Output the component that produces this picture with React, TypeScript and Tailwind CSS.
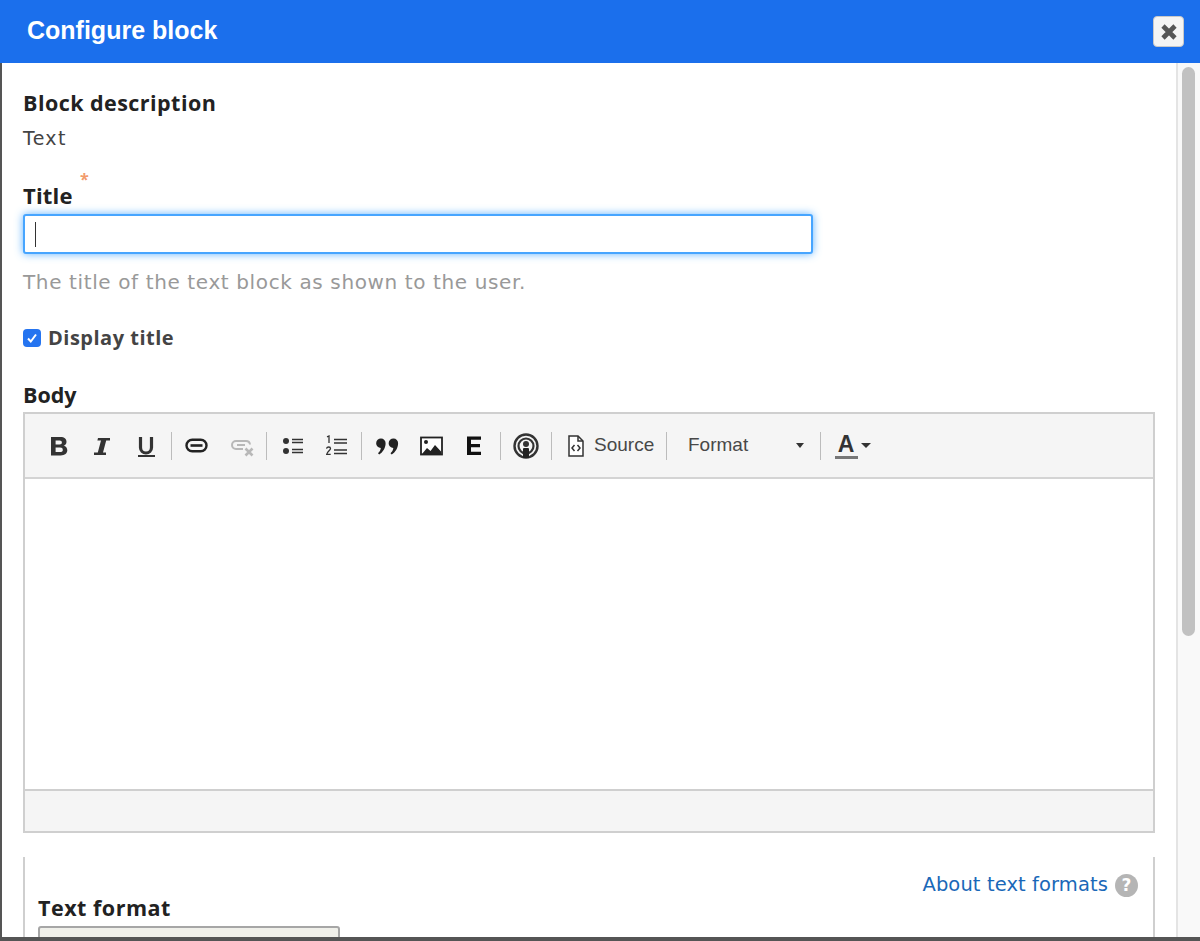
import React from "react";

const Sep = ({ ml, mr }: { ml: string; mr: string }) => (
  <span className={`w-px h-[28px] bg-[#bcbcbc] shrink-0 ${ml} ${mr}`} />
);

const Ico = ({ w, children, cls }: { w: number; children: React.ReactNode; cls: string }) => (
  <svg width={w} height={24} viewBox={`0 0 ${w} 24`} className={`shrink-0 ${cls}`}>
    {children}
  </svg>
);

const Quote = ({ x }: { x: number }) => (
  <path
    transform={`translate(${x} 0)`}
    d="M5 4.5a4.6 4.6 0 0 1 4.6 4.8c0 4.4-2.6 9-6.4 11.2L2 19.2c1.6-1.4 2.6-3 2.8-5.2A4.7 4.7 0 0 1 5 4.5z"
    fill="#222"
  />
);

export default function App() {
  return (
    <div className="w-[1200px] h-[941px] overflow-hidden bg-[#555555] pl-[2px] pb-[4px] font-['DejaVu_Sans',sans-serif]">
      <div className="h-[937px] bg-white flex flex-col">
        <header className="h-[63px] shrink-0 bg-[#1b6fec] -ml-[2px] pl-[27px] pr-[16px] flex items-center justify-between">
          <h1 className="font-['Liberation_Sans',sans-serif] font-bold text-[25px] leading-none text-white -mt-[2px]">
            Configure block
          </h1>
          <button className="w-[31px] h-[31px] rounded-[4px] bg-[#f4f4f4] border border-[#c8c8c8] flex items-center justify-center">
            <svg width="18" height="18" viewBox="0 0 18 18">
              <path d="M3 3 L15 15 M15 3 L3 15" stroke="#555" strokeWidth="4.6" />
            </svg>
          </button>
        </header>
        <div className="flex-1 flex min-h-0">
          <main className="flex-1 min-w-0 pl-[21px] pr-[21px] pt-[26px] overflow-hidden">
            <div className="text-[21.5px] leading-[28px] font-bold text-[#222222] tracking-[0.45px] font-['Open_Sans',sans-serif]">Block description</div>
            <div className="text-[19px] leading-[28px] text-[#444444] mt-[7px] tracking-[1.3px]">Text</div>

            <label className="block relative mt-[29px] text-[22px] leading-[28px] font-bold text-[#222222] tracking-[0.2px] font-['Open_Sans',sans-serif]">
              Title
              <span className="absolute left-[57px] -top-[16px] text-[16px] font-bold text-[#f29b6c]">*</span>
            </label>
            <div className="relative mt-[5px] w-[790px] h-[40px] rounded-[3px] border-2 border-[#47a5ff] bg-white shadow-[0_0_8px_rgba(60,160,255,0.8)] flex items-center pl-[10px]">
              <span className="w-px h-[25px] bg-[#333333]" />
            </div>
            <div className="mt-[14px] text-[20px] leading-[28px] text-[#999999] tracking-[0.62px]">
              The title of the text block as shown to the user.
            </div>

            <div className="mt-[28px] flex items-center h-[28px]">
              <span className="w-[18px] h-[18px] rounded-[4px] bg-[#2574f0] flex items-center justify-center">
                <svg width="12" height="12" viewBox="0 0 12 12">
                  <path d="M2 6.5 L4.8 9.5 L10 2.5" fill="none" stroke="#fff" strokeWidth="2" />
                </svg>
              </span>
              <span className="ml-[7px] text-[20px] font-bold text-[#444444] tracking-[0.5px] font-['Open_Sans',sans-serif]">Display title</span>
            </div>

            <div className="mt-[29px] text-[21.5px] leading-[28px] font-bold text-[#222222] font-['Open_Sans',sans-serif]">Body</div>

            <div className="mt-[3px] w-[1132px] border-2 border-[#cfcfcf] border-b-0">
              <div className="h-[65px] bg-[#f5f5f5] border-b-2 border-[#d4d4d4] flex items-center pl-[25px] text-[#333333] font-['Liberation_Sans',sans-serif]">
                <Ico w={20} cls="-ml-[1px]">
                  <path d="M2 3h9.5c3.8 0 6 1.8 6 4.8 0 2-1.1 3.4-2.9 4 2.3.5 3.7 2.2 3.7 4.5 0 3.1-2.4 5.2-6.6 5.2H2zm4.6 3.4v4h4c1.5 0 2.3-.8 2.3-2s-.8-2-2.3-2zm0 7.2v4.5h4.5c1.7 0 2.7-.8 2.7-2.2 0-1.5-1-2.3-2.7-2.3z" fill="#333" fillRule="evenodd" />
                </Ico>
                <Ico w={20} cls="ml-[22px]">
                  <path d="M7 4h12v2.6h-3.8l-3.2 11.8H15V21H3v-2.6h3.8L10 6.6H6.4z" fill="#333" />
                </Ico>
                <Ico w={20} cls="ml-[25px]">
                  <path d="M4.5 3v10.5a5.5 5.5 0 0 0 11 0V3" fill="none" stroke="#333" strokeWidth="3.2" />
                  <rect x="2" y="21" width="17" height="2" fill="#333" />
                </Ico>
                <Sep ml="ml-[15px]" mr="mr-[13px]" />
                <Ico w={23} cls="">
                  <rect x="1.5" y="5.7" width="20" height="11.6" rx="5.8" fill="none" stroke="#222" strokeWidth="2.4" />
                  <path d="M5.5 10.2h12v2.6h-12z" fill="#222" />
                </Ico>
                <Ico w={24} cls="ml-[22px]">
                  <g fill="none" stroke="#b8b8b8" strokeWidth="2">
                    <path d="M13 15H6a4 4 0 0 1 0-8h10a4 4 0 0 1 4 3.5" />
                    <path d="M7 11h8" />
                    <path d="M15.5 14.5l7 7M22.5 14.5l-7 7" strokeWidth="2.6" />
                  </g>
                </Ico>
                <Sep ml="ml-[12px]" mr="mr-[15px]" />
                <Ico w={22} cls="">
                  <circle cx="4" cy="7" r="3" fill="#333" />
                  <circle cx="4" cy="17" r="3" fill="#333" />
                  <path d="M10 5.5h11M10 8.5h11M10 15.5h11M10 18.5h11" stroke="#333" strokeWidth="1.5" />
                </Ico>
                <Ico w={22} cls="ml-[22px]">
                  <path d="M1 2.8 3 2v7" fill="none" stroke="#333" strokeWidth="1.3" />
                  <path d="M0.5 14.5c.5-2 4-2 4 0 0 1.6-3.4 3-3.8 5.8h4" fill="none" stroke="#333" strokeWidth="1.3" />
                  <path d="M8 5.5h13M8 9h13M8 16h13M8 19.5h13" stroke="#333" strokeWidth="1.5" />
                </Ico>
                <Sep ml="ml-[13px]" mr="mr-[14px]" />
                <Ico w={24} cls=""><Quote x={0} /><Quote x={12.5} /></Ico>
                <Ico w={23} cls="ml-[20px]">
                  <rect x="1" y="3.5" width="21" height="17" fill="#fff" stroke="#222" strokeWidth="1.8" />
                  <circle cx="6" cy="8" r="2" fill="#222" />
                  <path d="M2 20l5-6 3.5 3 4.5-6 6 6.5V20z" fill="#222" />
                </Ico>
                <Ico w={16} cls="ml-[23px]">
                  <path d="M1 2.5h14v3.2H5v4.4h9v3.2H5v4.4h10v3.3H1z" fill="#111" />
                </Ico>
                <Sep ml="ml-[18px]" mr="mr-[12px]" />
                <svg width="26" height="26" viewBox="0 0 26 26" className="shrink-0">
                  <circle cx="13" cy="13" r="11.5" fill="none" stroke="#333" strokeWidth="2.4" />
                  <circle cx="13" cy="13" r="7.5" fill="none" stroke="#333" strokeWidth="2.2" />
                  <circle cx="13" cy="11" r="3" fill="#333" />
                  <rect x="10" y="15" width="6" height="10" rx="1" fill="#222" />
                </svg>
                <Sep ml="ml-[12px]" mr="mr-[15px]" />
                <Ico w={18} cls="">
                  <path d="M2 2h9l5 5v15H2z" fill="#fff" stroke="#333" strokeWidth="1.5" />
                  <path d="M11 2v5h5" fill="none" stroke="#333" strokeWidth="1.5" />
                  <path d="M7.5 11l-2.5 3 2.5 3M10.5 11l2.5 3-2.5 3" fill="none" stroke="#333" strokeWidth="1.5" />
                </Ico>
                <span className="ml-[9px] w-[58px] text-[19px] text-[#484848]">Source</span>
                <Sep ml="ml-[14px]" mr="mr-[21px]" />
                <span className="text-[19px] text-[#484848] w-[108px]">Format</span>
                <span className="w-0 h-0 border-x-[4.5px] border-x-transparent border-t-[5px] border-t-[#333333]" />
                <Sep ml="ml-[16px]" mr="mr-[13px]" />
                <span className="flex flex-col items-center w-[24px] shrink-0">
                  <span className="text-[23px] leading-[23px] font-bold text-[#333333]">A</span>
                  <span className="w-[23px] h-[3px] bg-[#777777]" />
                </span>
                <span className="ml-[3px] w-0 h-0 border-x-[5px] border-x-transparent border-t-[5px] border-t-[#333333]" />
              </div>
              <div className="h-[312px] bg-white border-b-2 border-[#cfcfcf]" />
              <div className="h-[42px] bg-[#f5f5f5] border-b-2 border-[#cfcfcf]" />
            </div>

            <div className="mt-[24px] w-[1132px] h-[90px] border-x-2 border-[#cfcfcf] pl-[13px] pr-[15px] pt-[17px]">
              <div className="flex justify-end items-center h-[22px]">
                <span className="text-[19.5px] leading-[22px] text-[#1a68b8] tracking-[0.1px]">About text formats</span>
                <span className="ml-[7px] w-[23px] h-[23px] rounded-full bg-[#b5b5b5] text-white text-[17px] leading-[23px] font-bold text-center">?</span>
              </div>
              <div className="-mt-[2px] text-[21.5px] leading-[28px] font-bold text-[#222222] tracking-[0.5px] font-['Open_Sans',sans-serif]">Text format</div>
              <div className="mt-[4px] w-[302px] h-[30px] rounded-t-[3px] border-2 border-[#a6a6a6] bg-[#f0f0ea]" />
            </div>
          </main>
          <aside className="w-[24px] shrink-0 border-l-2 border-[#e4e4e4] bg-[#f9f9f9] pl-[4px] pt-[4px]">
            <div className="w-[13px] h-[569px] rounded-full bg-[#c1c1c1]" />
          </aside>
        </div>
      </div>
    </div>
  );
}
